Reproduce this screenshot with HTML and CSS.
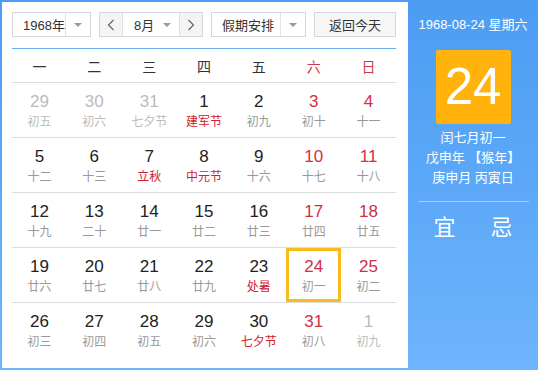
FILE: index.html
```html
<!DOCTYPE html>
<html lang="zh-CN">
<head>
    <meta charset="UTF-8">
    <title>万年历</title>
    <link rel="stylesheet" href="styles.css">
</head>
<body>
    <div class="calendar">
        <div class="main">
            <div class="toolbar">
                <div class="select year-select">
                    <span class="select-text">1968年</span>
                    <span class="select-arrow"><i class="caret"></i></span>
                </div>
                <div class="select month-select">
                    <span class="nav-btn">
                        <svg width="8" height="12" viewBox="0 0 8 12"><polyline points="6.5,1 1.5,6 6.5,11" fill="none" stroke="#666" stroke-width="1.2"/></svg>
                    </span>
                    <span class="select-text month-text">8月</span>
                    <i class="caret"></i>
                    <span class="nav-btn next">
                        <svg width="8" height="12" viewBox="0 0 8 12"><polyline points="1.5,1 6.5,6 1.5,11" fill="none" stroke="#666" stroke-width="1.2"/></svg>
                    </span>
                </div>
                <div class="select holiday-select">
                    <span class="select-text">假期安排</span>
                    <span class="select-arrow"><i class="caret"></i></span>
                </div>
                <button class="today-btn">返回今天</button>
            </div>

            <div class="weekdays">
                <span>一</span><span>二</span><span>三</span><span>四</span><span>五</span>
                <span class="weekend">六</span><span class="weekend">日</span>
            </div>

            <div class="days">
                <div class="day other"><b>29</b><em>初五</em></div>
                <div class="day other"><b>30</b><em>初六</em></div>
                <div class="day other"><b>31</b><em>七夕节</em></div>
                <div class="day"><b>1</b><em class="fest">建军节</em></div>
                <div class="day"><b>2</b><em>初九</em></div>
                <div class="day weekend"><b>3</b><em>初十</em></div>
                <div class="day weekend"><b>4</b><em>十一</em></div>

                <div class="day"><b>5</b><em>十二</em></div>
                <div class="day"><b>6</b><em>十三</em></div>
                <div class="day"><b>7</b><em class="fest">立秋</em></div>
                <div class="day"><b>8</b><em class="fest">中元节</em></div>
                <div class="day"><b>9</b><em>十六</em></div>
                <div class="day weekend"><b>10</b><em>十七</em></div>
                <div class="day weekend"><b>11</b><em>十八</em></div>

                <div class="day"><b>12</b><em>十九</em></div>
                <div class="day"><b>13</b><em>二十</em></div>
                <div class="day"><b>14</b><em>廿一</em></div>
                <div class="day"><b>15</b><em>廿二</em></div>
                <div class="day"><b>16</b><em>廿三</em></div>
                <div class="day weekend"><b>17</b><em>廿四</em></div>
                <div class="day weekend"><b>18</b><em>廿五</em></div>

                <div class="day"><b>19</b><em>廿六</em></div>
                <div class="day"><b>20</b><em>廿七</em></div>
                <div class="day"><b>21</b><em>廿八</em></div>
                <div class="day"><b>22</b><em>廿九</em></div>
                <div class="day"><b>23</b><em class="fest">处暑</em></div>
                <div class="day weekend selected"><b>24</b><em>初一</em></div>
                <div class="day weekend"><b>25</b><em>初二</em></div>

                <div class="day"><b>26</b><em>初三</em></div>
                <div class="day"><b>27</b><em>初四</em></div>
                <div class="day"><b>28</b><em>初五</em></div>
                <div class="day"><b>29</b><em>初六</em></div>
                <div class="day"><b>30</b><em class="fest">七夕节</em></div>
                <div class="day weekend"><b>31</b><em>初八</em></div>
                <div class="day other"><b>1</b><em>初九</em></div>
            </div>
        </div>

        <div class="side">
            <div class="side-date">1968-08-24 星期六</div>
            <div class="side-day">24</div>
            <div class="side-lunar">
                <p>闰七月初一</p>
                <p>戊申年 【猴年】</p>
                <p>庚申月 丙寅日</p>
            </div>
            <div class="side-yiji">
                <span>宜</span>
                <span>忌</span>
            </div>
        </div>
    </div>
</body>
</html>
```

FILE: styles.css
```css
body {
    margin: 0;
    padding: 0;
    font-family: "Liberation Sans", "Noto Sans CJK SC", sans-serif;
    color: #333;
}

.calendar {
    display: flex;
    width: 538px;
    height: 370px;
    box-sizing: border-box;
    padding: 2px 0 2px 2px;
    background: linear-gradient(#4c9cf3, #6db5fc);
}

.main {
    width: 406px;
    background-color: #fff;
    padding: 10px 12px 0 10px;
    box-sizing: border-box;
}

/* toolbar */
.toolbar {
    display: flex;
    gap: 8px;
    height: 25px;
}

.select {
    display: flex;
    align-items: center;
    height: 25px;
    box-sizing: border-box;
    border: 1px solid #d6d6d6;
    background-color: #fff;
    font-size: 13px;
}

.select-text {
    flex: 1;
    padding-left: 10px;
}

.select-arrow {
    display: flex;
    align-items: center;
    justify-content: center;
    width: 24px;
    height: 100%;
    border-left: 1px solid #e2e2e2;
}

.caret {
    display: block;
    width: 0;
    height: 0;
    border-left: 4px solid transparent;
    border-right: 4px solid transparent;
    border-top: 4px solid #999;
}

.year-select {
    width: 79px;
}

.month-select {
    width: 104px;
}

.month-select .caret {
    margin-right: 8px;
}

.month-text {
    padding-left: 11px;
}

.nav-btn {
    display: flex;
    align-items: center;
    justify-content: center;
    width: 22px;
    height: 100%;
    background-color: #f4f4f4;
    border-right: 1px solid #e0e0e0;
}

.nav-btn.next {
    border-right: none;
    border-left: 1px solid #e0e0e0;
}

.holiday-select {
    width: 95px;
}

.today-btn {
    width: 82px;
    height: 25px;
    margin: 0;
    padding: 0;
    border: 1px solid #d6d6d6;
    background-color: #f6f6f6;
    font-family: "Liberation Sans", "Noto Sans CJK SC", sans-serif;
    font-size: 13px;
    color: #333;
}

/* weekday header */
.weekdays {
    display: grid;
    grid-template-columns: repeat(7, 1fr);
    margin-top: 11px;
    height: 34px;
    box-sizing: border-box;
    border-top: 1px solid #6aaef0;
    align-items: center;
    text-align: center;
    font-size: 14px;
    color: #333;
}

.weekdays .weekend {
    color: #d03a4c;
}

/* day grid */
.days {
    display: grid;
    grid-template-columns: repeat(7, 1fr);
    grid-auto-rows: 55px;
}

.day {
    box-sizing: border-box;
    border-top: 1px solid #dcdcdc;
    padding-top: 9px;
    text-align: center;
}

.day b {
    display: block;
    font-weight: normal;
    font-size: 17px;
    line-height: 20px;
    color: #222;
}

.day em {
    display: block;
    font-style: normal;
    font-size: 12px;
    line-height: 16px;
    margin-top: 2px;
    color: #999;
}

.day.weekend b {
    color: #d22f3f;
}

.day em.fest {
    color: #d0202e;
}

.day.other b,
.day.other em {
    color: #bbb;
}

.day.selected {
    box-shadow: inset 0 0 0 3px #f7bb1c;
}

/* side panel */
.side {
    flex: 1;
    display: flex;
    flex-direction: column;
    align-items: center;
    padding-top: 13px;
    color: #fff;
}

.side-date {
    font-size: 13px;
    line-height: 20px;
}

.side-day {
    width: 75px;
    height: 74px;
    margin-top: 15px;
    border-radius: 2px;
    background-color: #ffb30c;
    font-size: 51px;
    line-height: 74px;
    text-align: center;
}

.side-lunar {
    margin-top: 4px;
    text-align: center;
    font-size: 13px;
    line-height: 20px;
}

.side-lunar p {
    margin: 0;
}

.side-yiji {
    display: flex;
    gap: 35px;
    width: 111px;
    justify-content: center;
    margin-top: 13px;
    padding-top: 11px;
    border-top: 1px solid rgba(255, 255, 255, 0.45);
    font-size: 22px;
    line-height: 30px;
}
```
